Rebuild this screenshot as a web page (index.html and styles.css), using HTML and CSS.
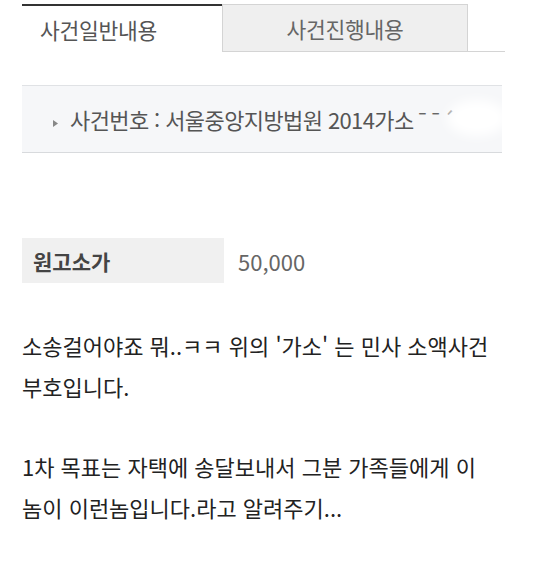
FILE: index.html
```html
<!DOCTYPE html>
<html lang="ko">
<head>
  <meta charset="UTF-8" />
  <meta name="viewport" content="width=device-width, initial-scale=1.0" />
  <title>사건일반내용</title>
  <link rel="stylesheet" href="styles.css">
</head>
<body>
  <main class="page">
    <!-- Tabs -->
    <div class="tabs">
      <div class="tab active">사건일반내용</div>
      <div class="tab">사건진행내용</div>
      <div class="tab-rest"></div>
    </div>

    <!-- Case number -->
    <div class="case-box">
      <svg class="bullet" width="5" height="7" viewBox="0 0 5 7"><path d="M0 0 L5 3.5 L0 7 Z" fill="#888"/></svg>
      <span class="case-text">사건번호 : 서울중앙지방법원 2014가소<span class="smudge">¯¯´</span></span>
      <span class="blur"></span>
    </div>

    <!-- Claim amount -->
    <div class="info-row">
      <div class="info-label">원고소가</div>
      <div class="info-value">50,000</div>
    </div>

    <!-- Comment -->
    <p class="comment">소송걸어야죠 뭐..ㅋㅋ 위의 '가소' 는 민사 소액사건 부호입니다.</p>
    <p class="comment">1차 목표는 자택에 송달보내서 그분 가족들에게 이 놈이 이런놈입니다.라고 알려주기...</p>
  </main>
</body>
</html>
```

FILE: styles.css
```css
* { box-sizing: border-box; }
body {
  margin: 0;
  background: #fff;
  font-family: "Noto Sans CJK KR", "Noto Sans", sans-serif;
}
.page {
  padding: 4px 0 0 22px;
}
.tabs {
  display: flex;
  width: 483px;
  height: 48px;
}
.tab {
  width: 246px;
  display: flex;
  align-items: center;
  justify-content: center;
  font-size: 21.5px;
  color: #666;
  background: #efefef;
  border: 1px solid #d4d4d4;
  letter-spacing: -0.3px;
}
.tab.active {
  width: 200px;
  justify-content: flex-start;
  padding-left: 18px;
  background: #fff;
  color: #555;
  border: none;
  border-top: 2px solid #333;
}
.tab-rest {
  flex: 1;
  border-bottom: 1px solid #d4d4d4;
}
.case-box {
  position: relative;
  margin-top: 33px;
  width: 480px;
  height: 68px;
  background: #f6f7f9;
  border-top: 1px solid #e0e2e5;
  border-bottom: 1px solid #d8dadd;
  display: flex;
  align-items: center;
  padding-left: 31px;
  font-size: 22px;
  color: #555;
  letter-spacing: -0.6px;
  overflow: hidden;
}
.bullet {
  margin-right: 12px;
  margin-top: 8px;
}
.smudge {
  color: #666;
  margin-left: 2px;
  letter-spacing: 0;
}
.blur {
  position: absolute;
  left: 425px;
  top: 14px;
  width: 60px;
  height: 36px;
  background: #fff;
  border-radius: 50%;
  filter: blur(6px);
}
.info-row {
  display: flex;
  align-items: center;
  margin-top: 85px;
}
.info-label {
  width: 202px;
  height: 45px;
  background: #f0f0f0;
  padding-left: 11px;
  display: flex;
  align-items: center;
  font-size: 21px;
  font-weight: bold;
  color: #444;
}
.info-value {
  margin-left: 14px;
  font-size: 22px;
  color: #666;
}
.comment {
  width: 495px;
  margin: 42px 0 0;
  font-size: 22px;
  line-height: 41px;
  color: #222;
  word-break: keep-all;
}
.comment + .comment {
  margin-top: 39px;
}
```
